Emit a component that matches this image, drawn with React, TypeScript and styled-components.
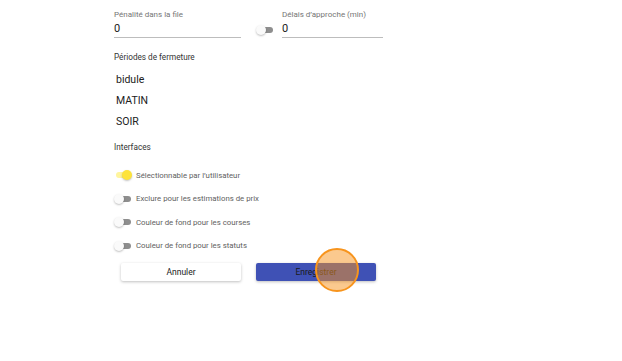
import React from 'react';
import styled, { createGlobalStyle } from 'styled-components';

const Global = createGlobalStyle`
  html, body { margin: 0; padding: 0; background: #fff; }
  body { font-family: Roboto, "Liberation Sans", Arial, sans-serif; }
`;

const Page = styled.div`
  width: 622px;
  height: 361px;
  position: relative;
  overflow: hidden;
  background: #fff;
`;

const Form = styled.div`
  padding: 9px 0 0 114px;
  display: flex;
  flex-direction: column;
`;

const FieldRow = styled.div`
  display: flex;
  align-items: flex-end;
`;

const Field = styled.div<{ $width: number }>`
  width: ${(p) => p.$width}px;
  display: flex;
  flex-direction: column;
`;

const Label = styled.div`
  font-size: 8px;
  line-height: 11px;
  color: #757575;
`;

const Value = styled.div`
  font-size: 11px;
  line-height: 14px;
  color: #212121;
  padding: 2px 0 1px;
  border-bottom: 1px solid #bdbdbd;
`;

const SectionTitle = styled.div<{ $top: number }>`
  margin-top: ${(p) => p.$top}px;
  font-size: 8.2px;
  line-height: 12px;
  color: #333;
`;

const List = styled.div`
  display: flex;
  flex-direction: column;
  gap: 7px;
  padding: 10px 0 0 2px;
`;

const ListItem = styled.div`
  font-size: 10.5px;
  line-height: 14px;
  color: #212121;
`;

const ToggleList = styled.div`
  display: flex;
  flex-direction: column;
  gap: 9.5px;
  margin-top: 15px;
`;

const ToggleRow = styled.div`
  display: flex;
  align-items: center;
  gap: 5px;
  height: 14px;
`;

const ToggleText = styled.span`
  font-size: 7.8px;
  color: #616161;
`;

const Track = styled.span<{ $on?: boolean; $ml?: number }>`
  position: relative;
  width: 17px;
  height: 12px;
  flex: none;
  margin-left: ${(p) => p.$ml ?? 0}px;
  &::before {
    content: '';
    position: absolute;
    left: 2px;
    right: 0;
    top: 3px;
    height: 6px;
    border-radius: 3px;
    background: ${(p) => (p.$on ? '#fff59d' : '#8e8e8e')};
  }
  &::after {
    content: '';
    position: absolute;
    top: 1px;
    left: ${(p) => (p.$on ? '8px' : '0')};
    width: 10px;
    height: 10px;
    border-radius: 50%;
    background: ${(p) => (p.$on ? '#fde33a' : '#fafafa')};
    box-shadow: 0 1px 2px rgba(0, 0, 0, 0.25);
  }
`;

const Actions = styled.div`
  display: flex;
  gap: 15px;
  margin: 10px 0 0 7px;
`;

const Button = styled.button<{ $primary?: boolean }>`
  width: 120px;
  height: 18px;
  border: none;
  border-radius: 2px;
  font-family: inherit;
  font-size: 8.5px;
  color: #1a1a1a;
  background: ${(p) => (p.$primary ? '#3f51b5' : '#fff')};
  box-shadow: 0 1px 3px rgba(0, 0, 0, 0.25);
  padding: 0;
`;

const Touch = styled.div`
  position: absolute;
  left: 315px;
  top: 248px;
  width: 40px;
  height: 40px;
  border-radius: 50%;
  border: 2px solid #f7941d;
  background: rgba(247, 148, 29, 0.5);
`;

const toggles = [
  { label: 'Sélectionnable par l’utilisateur', on: true },
  { label: 'Exclure pour les estimations de prix', on: false },
  { label: 'Couleur de fond pour les courses', on: false },
  { label: 'Couleur de fond pour les statuts', on: false },
];

export default function App() {
  return (
    <Page>
      <Global />
      <Form>
        <FieldRow>
          <Field $width={127}>
            <Label>Pénalité dans la file</Label>
            <Value>0</Value>
          </Field>
          <Track $ml={15} style={{ marginBottom: 2 }} />
          <Field $width={101} style={{ marginLeft: 9 }}>
            <Label>Délais d’approche (min)</Label>
            <Value>0</Value>
          </Field>
        </FieldRow>

        <SectionTitle $top={13}>Périodes de fermeture</SectionTitle>
        <List>
          <ListItem>bidule</ListItem>
          <ListItem>MATIN</ListItem>
          <ListItem>SOIR</ListItem>
        </List>

        <SectionTitle $top={12}>Interfaces</SectionTitle>
        <ToggleList>
          {toggles.map((t) => (
            <ToggleRow key={t.label}>
              <Track $on={t.on} />
              <ToggleText>{t.label}</ToggleText>
            </ToggleRow>
          ))}
        </ToggleList>

        <Actions>
          <Button>Annuler</Button>
          <Button $primary>Enregistrer</Button>
        </Actions>
      </Form>
      <Touch />
    </Page>
  );
}
